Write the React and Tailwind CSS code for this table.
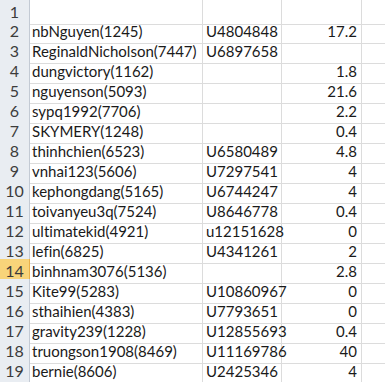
const rows = [
  ["", "", ""],
  ["nbNguyen(1245)", "U4804848", "17.2"],
  ["ReginaldNicholson(7447)", "U6897658", ""],
  ["dungvictory(1162)", "", "1.8"],
  ["nguyenson(5093)", "", "21.6"],
  ["sypq1992(7706)", "", "2.2"],
  ["SKYMERY(1248)", "", "0.4"],
  ["thinhchien(6523)", "U6580489", "4.8"],
  ["vnhai123(5606)", "U7297541", "4"],
  ["kephongdang(5165)", "U6744247", "4"],
  ["toivanyeu3q(7524)", "U8646778", "0.4"],
  ["ultimatekid(4921)", "u12151628", "0"],
  ["lefin(6825)", "U4341261", "2"],
  ["binhnam3076(5136)", "", "2.8"],
  ["Kite99(5283)", "U10860967", "0"],
  ["sthaihien(4383)", "U7793651", "0"],
  ["gravity239(1228)", "U12855693", "0.4"],
  ["truongson1908(8469)", "U11169786", "40"],
  ["bernie(8606)", "U2425346", "4"],
];

export default function App() {
  return (
    <div
      className="w-[385px] h-[382px] overflow-hidden bg-white text-[#1a1a1a] text-[15px] [font-variant-ligatures:none]"
      style={{ fontFamily: 'Lato, "Liberation Sans", sans-serif' }}
    >
      {rows.map(([name, id, val], i) => {
        const n = i + 1;
        const selected = n === 14;
        return (
          <div
            key={n}
            className={`grid grid-cols-[30px_173px_79px_80px_1fr] ${n === 1 ? "h-[19px]" : "h-[20px]"}`}
          >
            <div
              className={`flex items-center justify-center border-r border-b text-[16px] ${
                selected
                  ? "bg-[#f8d47a] border-[#e8b04a] text-[#3a3a3a]"
                  : "bg-[#e9edf2] border-[#c3cad4] text-[#3c3c3c]"
              }`}
            >
              {n}
            </div>
            <div className="flex items-center pl-[2px] border-r border-b border-[#dcdcdc] whitespace-nowrap">
              {name}
            </div>
            <div className="flex items-center pl-[3px] border-r border-b border-[#dcdcdc] whitespace-nowrap">
              {id}
            </div>
            <div className="flex items-center justify-end pr-[4px] border-r border-b border-[#dcdcdc]">
              {val}
            </div>
            <div className="border-b border-[#dcdcdc]" />
          </div>
        );
      })}
    </div>
  );
}
